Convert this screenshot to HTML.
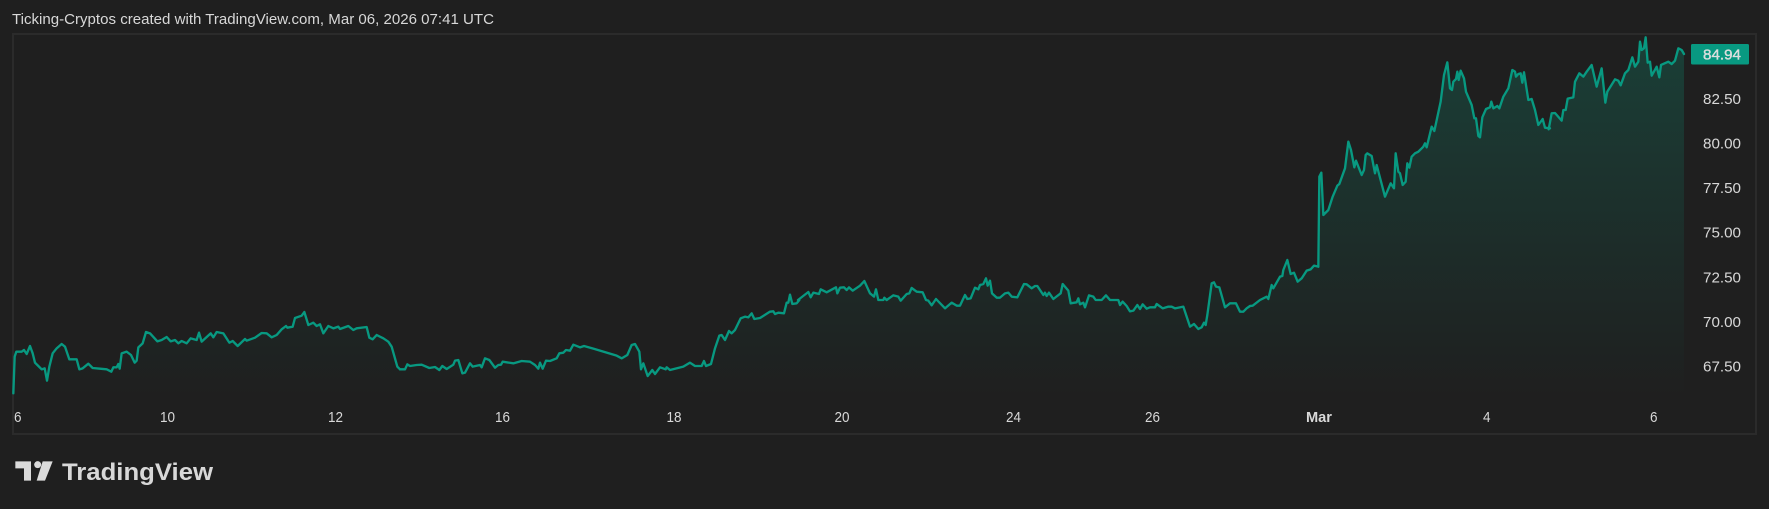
<!DOCTYPE html>
<html>
<head>
<meta charset="utf-8">
<style>
html,body{margin:0;padding:0;background:#1f1f1f;width:1769px;height:509px;overflow:hidden}
svg{display:block}
text{font-family:"Liberation Sans",sans-serif;fill:#d8d8d8}
.l{fill:none;stroke:#089981;stroke-width:7;stroke-linejoin:round;stroke-linecap:round}
</style>
</head>
<body>
<svg width="1769" height="509" viewBox="0 0 1769 509" xmlns="http://www.w3.org/2000/svg">
<defs>
<linearGradient id="g" gradientUnits="userSpaceOnUse" x1="0" y1="38" x2="0" y2="396">
<stop offset="0" stop-color="#1a3f37"/>
<stop offset="1" stop-color="#1f1f1f"/>
</linearGradient>
<clipPath id="c">
<polygon transform="translate(0,290) scale(.33333)" points="40,315 40,310 44,200 49,185 65,185 72,180 80,192 90,168 98,190 105,218 115,228 125,238 134,235 141,272 148,230 158,190 170,175 185,162 195,170 208,208 230,208 238,238 248,235 265,221 278,234 300,236 320,238 334,245 340,232 350,232 355,222 359,236 365,190 380,185 393,195 404,218 410,212 415,172 428,160 438,126 450,130 472,154 485,150 500,141 512,154 525,150 535,160 545,153 560,160 572,145 590,150 597,128 605,155 632,130 640,142 650,126 670,130 688,158 698,153 713,168 735,147 740,152 765,143 785,129 800,130 815,142 830,135 845,118 858,108 862,113 878,110 885,84 905,77 913,66 925,105 940,98 950,108 960,103 970,130 985,108 1000,115 1015,110 1020,117 1045,108 1060,120 1070,115 1100,111 1108,143 1118,148 1130,135 1150,145 1165,155 1175,170 1192,230 1200,238 1200,315"/>
<polygon transform="translate(400,290) scale(.33333)" points="0,315 0,238 15,238 22,223 30,228 50,225 65,224 88,234 105,231 118,240 127,228 140,237 160,224 165,212 175,210 187,250 195,248 210,220 218,230 240,225 245,232 255,205 268,210 285,233 295,225 303,224 308,215 340,220 365,213 390,215 405,225 415,236 420,218 428,236 438,212 450,213 470,205 478,190 490,188 498,180 510,182 520,164 540,172 552,168 580,176 600,182 650,197 665,205 682,195 695,165 705,162 718,185 723,238 730,220 743,258 757,240 765,252 780,232 797,238 800,232 810,240 850,230 870,218 885,228 905,228 912,213 918,228 933,222 945,175 958,137 965,135 975,150 987,123 995,130 1005,120 1022,85 1035,80 1045,82 1055,70 1063,87 1080,84 1110,65 1120,64 1125,72 1135,68 1152,70 1160,38 1165,38 1170,14 1177,42 1190,40 1198,30 1198,315"/>
<polygon transform="translate(750,250) scale(.33333)" points="144,435 144,150 175,126 182,142 190,128 207,132 212,118 230,127 258,112 262,130 270,113 282,112 290,120 297,112 308,122 330,107 343,93 360,130 372,140 378,118 385,150 400,150 403,143 410,150 430,136 445,140 452,152 470,132 478,130 485,114 500,125 518,127 528,150 535,152 545,166 558,147 585,175 605,158 620,167 630,167 645,135 652,147 662,145 675,113 685,118 690,105 700,102 708,85 713,107 720,92 726,130 740,143 750,143 765,130 775,128 785,140 802,142 822,102 830,103 845,115 855,108 862,108 880,135 885,128 890,138 897,128 910,147 932,130 938,102 955,122 962,160 980,157 985,145 990,163 1000,158 1005,172 1017,136 1030,140 1037,150 1055,150 1068,136 1080,150 1105,150 1110,165 1118,155 1130,168 1140,184 1150,182 1162,165 1170,177 1178,163 1190,176 1200,172 1215,172 1220,162 1238,175 1255,170 1265,170 1275,175 1300,170 1310,200 1320,230 1332,222 1345,237 1355,232 1362,218 1367,225 1372,195 1385,100 1392,97 1398,110 1408,112 1425,172 1440,160 1458,160 1470,185 1480,185 1490,175 1500,168 1500,435"/>
<polygon transform="translate(1200,150) scale(.33333)" points="150,735 150,468 158,467 180,450 200,440 205,447 215,405 220,415 240,380 247,378 250,360 262,330 272,372 282,368 293,395 305,385 320,362 332,358 342,347 355,350 355,735"/>
<polygon transform="translate(1250,30) scale(.33333)" points="205,1095 205,710 208,440 214,428 220,555 235,540 248,500 262,467 268,462 285,415 295,335 303,360 313,412 318,392 335,435 342,420 347,375 352,370 365,378 375,430 380,405 405,500 422,460 432,475 437,370 445,425 450,430 458,465 467,455 472,400 478,413 485,380 495,370 505,365 520,350 525,340 530,352 545,290 553,303 572,215 582,135 592,97 600,175 606,180 610,155 618,147 622,125 626,150 632,122 642,145 648,185 665,225 673,265 678,265 685,318 690,322 697,262 708,237 720,232 724,215 730,235 742,228 748,235 760,200 775,175 787,120 795,125 798,140 805,132 812,130 817,158 822,127 835,210 845,207 855,240 865,285 878,267 885,293 900,295 900,1095"/>
<polygon transform="translate(1500,20) scale(.33333)" points="146,1125 146,328 155,280 165,279 185,302 190,270 197,270 203,236 220,232 225,185 238,160 250,170 260,155 275,135 290,200 305,145 316,248 322,215 345,178 355,182 362,196 375,160 385,150 397,112 405,140 415,125 420,65 425,90 432,85 437,52 443,128 450,125 455,167 470,140 478,172 483,135 505,125 515,132 525,122 535,85 545,90 552,102 552,1125"/>
</clipPath>
</defs>

<rect width="1769" height="509" fill="#1f1f1f"/>

<text x="12" y="24" font-size="14.5" textLength="482" lengthAdjust="spacingAndGlyphs" fill="#d6d6d6">Ticking-Cryptos created with TradingView.com, Mar 06, 2026 07:41 UTC</text>

<rect x="13" y="34" width="1743" height="400" fill="none" stroke="#2b2b2b" stroke-width="2"/>

<rect x="13" y="30" width="1672" height="370" fill="url(#g)" clip-path="url(#c)"/>

<polyline class="l" transform="translate(0,290) scale(.33333)" points="40,310 44,200 49,185 65,185 72,180 80,192 90,168 98,190 105,218 115,228 125,238 134,235 141,272 148,230 158,190 170,175 185,162 195,170 208,208 230,208 238,238 248,235 265,221 278,234 300,236 320,238 334,245 340,232 350,232 355,222 359,236 365,190 380,185 393,195 404,218 410,212 415,172 428,160 438,126 450,130 472,154 485,150 500,141 512,154 525,150 535,160 545,153 560,160 572,145 590,150 597,128 605,155 632,130 640,142 650,126 670,130 688,158 698,153 713,168 735,147 740,152 765,143 785,129 800,130 815,142 830,135 845,118 858,108 862,113 878,110 885,84 905,77 913,66 925,105 940,98 950,108 960,103 970,130 985,108 1000,115 1015,110 1020,117 1045,108 1060,120 1070,115 1100,111 1108,143 1118,148 1130,135 1150,145 1165,155 1175,170 1192,230 1200,238"/>
<polyline class="l" transform="translate(400,290) scale(.33333)" points="0,238 15,238 22,223 30,228 50,225 65,224 88,234 105,231 118,240 127,228 140,237 160,224 165,212 175,210 187,250 195,248 210,220 218,230 240,225 245,232 255,205 268,210 285,233 295,225 303,224 308,215 340,220 365,213 390,215 405,225 415,236 420,218 428,236 438,212 450,213 470,205 478,190 490,188 498,180 510,182 520,164 540,172 552,168 580,176 600,182 650,197 665,205 682,195 695,165 705,162 718,185 723,238 730,220 743,258 757,240 765,252 780,232 797,238 800,232 810,240 850,230 870,218 885,228 905,228 912,213 918,228 933,222 945,175 958,137 965,135 975,150 987,123 995,130 1005,120 1022,85 1035,80 1045,82 1055,70 1063,87 1080,84 1110,65 1120,64 1125,72 1135,68 1152,70 1160,38 1165,38 1170,14 1177,42 1190,40 1198,30"/>
<polyline class="l" transform="translate(750,250) scale(.33333)" points="144,150 175,126 182,142 190,128 207,132 212,118 230,127 258,112 262,130 270,113 282,112 290,120 297,112 308,122 330,107 343,93 360,130 372,140 378,118 385,150 400,150 403,143 410,150 430,136 445,140 452,152 470,132 478,130 485,114 500,125 518,127 528,150 535,152 545,166 558,147 585,175 605,158 620,167 630,167 645,135 652,147 662,145 675,113 685,118 690,105 700,102 708,85 713,107 720,92 726,130 740,143 750,143 765,130 775,128 785,140 802,142 822,102 830,103 845,115 855,108 862,108 880,135 885,128 890,138 897,128 910,147 932,130 938,102 955,122 962,160 980,157 985,145 990,163 1000,158 1005,172 1017,136 1030,140 1037,150 1055,150 1068,136 1080,150 1105,150 1110,165 1118,155 1130,168 1140,184 1150,182 1162,165 1170,177 1178,163 1190,176 1200,172 1215,172 1220,162 1238,175 1255,170 1265,170 1275,175 1300,170 1310,200 1320,230 1332,222 1345,237 1355,232 1362,218 1367,225 1372,195 1385,100 1392,97 1398,110 1408,112 1425,172 1440,160 1458,160 1470,185 1480,185 1490,175 1500,168"/>
<polyline class="l" transform="translate(1200,150) scale(.33333)" points="150,468 158,467 180,450 200,440 205,447 215,405 220,415 240,380 247,378 250,360 262,330 272,372 282,368 293,395 305,385 320,362 332,358 342,347 355,350"/>
<polyline class="l" transform="translate(1250,30) scale(.33333)" points="205,710 208,440 214,428 220,555 235,540 248,500 262,467 268,462 285,415 295,335 303,360 313,412 318,392 335,435 342,420 347,375 352,370 365,378 375,430 380,405 405,500 422,460 432,475 437,370 445,425 450,430 458,465 467,455 472,400 478,413 485,380 495,370 505,365 520,350 525,340 530,352 545,290 553,303 572,215 582,135 592,97 600,175 606,180 610,155 618,147 622,125 626,150 632,122 642,145 648,185 665,225 673,265 678,265 685,318 690,322 697,262 708,237 720,232 724,215 730,235 742,228 748,235 760,200 775,175 787,120 795,125 798,140 805,132 812,130 817,158 822,127 835,210 845,207 855,240 865,285 878,267 885,293 900,295"/>
<polyline class="l" transform="translate(1500,20) scale(.33333)" points="146,328 155,280 165,279 185,302 190,270 197,270 203,236 220,232 225,185 238,160 250,170 260,155 275,135 290,200 305,145 316,248 322,215 345,178 355,182 362,196 375,160 385,150 397,112 405,140 415,125 420,65 425,90 432,85 437,52 443,128 450,125 455,167 470,140 478,172 483,135 505,125 515,132 525,122 535,85 545,90 552,102"/>

<rect x="1691" y="44" width="58" height="20.5" rx="1.5" fill="#089981"/>
<text x="1703" y="59.5" font-size="15" textLength="38" lengthAdjust="spacingAndGlyphs" fill="#eeeeee" stroke="#eeeeee" stroke-width=".3">84.94</text>
<text x="1703" y="104" font-size="15" textLength="38" lengthAdjust="spacingAndGlyphs">82.50</text>
<text x="1703" y="148.5" font-size="15" textLength="38" lengthAdjust="spacingAndGlyphs">80.00</text>
<text x="1703" y="193" font-size="15" textLength="38" lengthAdjust="spacingAndGlyphs">77.50</text>
<text x="1703" y="237.5" font-size="15" textLength="38" lengthAdjust="spacingAndGlyphs">75.00</text>
<text x="1703" y="282.5" font-size="15" textLength="38" lengthAdjust="spacingAndGlyphs">72.50</text>
<text x="1703" y="327" font-size="15" textLength="38" lengthAdjust="spacingAndGlyphs">70.00</text>
<text x="1703" y="371.5" font-size="15" textLength="38" lengthAdjust="spacingAndGlyphs">67.50</text>

<text x="14" y="422" font-size="15" textLength="7.5" lengthAdjust="spacingAndGlyphs">6</text>
<text x="160" y="422" font-size="15" textLength="15" lengthAdjust="spacingAndGlyphs">10</text>
<text x="328" y="422" font-size="15" textLength="15" lengthAdjust="spacingAndGlyphs">12</text>
<text x="495" y="422" font-size="15" textLength="15" lengthAdjust="spacingAndGlyphs">16</text>
<text x="666.5" y="422" font-size="15" textLength="15" lengthAdjust="spacingAndGlyphs">18</text>
<text x="834.5" y="422" font-size="15" textLength="15" lengthAdjust="spacingAndGlyphs">20</text>
<text x="1006" y="422" font-size="15" textLength="15" lengthAdjust="spacingAndGlyphs">24</text>
<text x="1145" y="422" font-size="15" textLength="15" lengthAdjust="spacingAndGlyphs">26</text>
<text x="1306" y="422" font-size="15" font-weight="700" textLength="26" lengthAdjust="spacingAndGlyphs">Mar</text>
<text x="1483" y="422" font-size="15" textLength="7.5" lengthAdjust="spacingAndGlyphs">4</text>
<text x="1650" y="422" font-size="15" textLength="7.5" lengthAdjust="spacingAndGlyphs">6</text>

<g transform="translate(0,320) scale(.33333)" fill="#dbdbdb">
<path d="M46 424H93V482H72V445H46Z"/>
<circle cx="113" cy="434" r="10.5"/>
<path d="M128 424H158L135 482H110Z"/>
</g>
<text x="62" y="480" font-size="24.5" font-weight="700" textLength="151" lengthAdjust="spacingAndGlyphs" fill="#dbdbdb">TradingView</text>
</svg>
</body>
</html>
